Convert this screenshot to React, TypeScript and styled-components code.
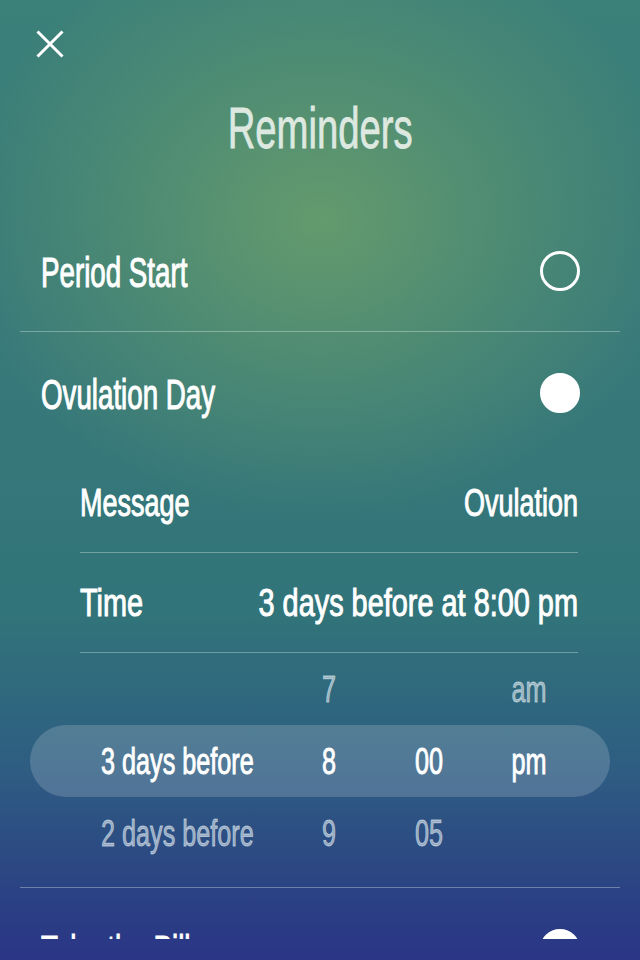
import React from "react";
import styled, { createGlobalStyle } from "styled-components";

const Global = createGlobalStyle`
  html, body { margin: 0; padding: 0; width: 640px; height: 960px; overflow: hidden; }
  body { font-family: "Liberation Sans", Arial, sans-serif; -webkit-font-smoothing: antialiased; }
  * { box-sizing: border-box; }
`;

const Screen = styled.div`
  width: 640px;
  height: 960px;
  overflow: hidden;
  display: flex;
  flex-direction: column;
  color: #fff;
  background:
    radial-gradient(ellipse 360px 300px at 50% 220px, rgba(102, 156, 108, 0.95), rgba(102, 156, 108, 0) 100%),
    linear-gradient(180deg, #3b8079 0%, #37797a 40%, #317479 64%, #2e5d82 80%, #2b4483 92%, #2a3586 100%);
`;

const Header = styled.header`
  height: 210px;
  flex-shrink: 0;
  display: flex;
  flex-direction: column;
  padding-top: 30px;
`;

const CloseButton = styled.button`
  width: 28px;
  height: 28px;
  margin-left: 36px;
  padding: 0;
  border: none;
  background: none;
  display: flex;
`;

const Title = styled.h1`
  margin: 40px 0 0;
  text-align: center;
  font-weight: 400;
  font-size: 58px;
  line-height: 60px;
  color: #dde9e0;
  -webkit-text-stroke: 0.8px #dde9e0;
`;

/* Condensed text: the face has no narrow cut, so it is compressed horizontally */
const Narrow = styled.span<{ $sx: number; $origin?: string }>`
  display: inline-block;
  white-space: nowrap;
  transform: scaleX(${(p) => p.$sx});
  transform-origin: ${(p) => p.$origin ?? "left center"};
`;

const NarrowLine = styled.div<{ $sx: number }>`
  flex-shrink: 0;
  width: ${(p) => 100 / p.$sx}%;
  display: flex;
  align-items: center;
  justify-content: space-between;
  white-space: nowrap;
  transform: scaleX(${(p) => p.$sx});
  transform-origin: left center;
`;

const List = styled.div`
  height: 729px;
  overflow: hidden;
  flex-shrink: 0;
`;

const Section = styled.section`
  margin: 0 20px;
  border-bottom: 1px solid rgba(255, 255, 255, 0.32);
`;

const SectionHeader = styled.div`
  height: 121px;
  display: flex;
  align-items: center;
  justify-content: space-between;
  padding: 4px 40px 0 21px;
`;

const SectionLabel = styled(Narrow)`
  font-size: 42px;
  color: #fff;
  -webkit-text-stroke: 1.1px #fff;
`;

const Toggle = styled.span<{ $on?: boolean }>`
  width: 40px;
  height: 40px;
  flex-shrink: 0;
  border-radius: 50%;
  border: 3px solid #fff;
  background: ${(p) => (p.$on ? "#fff" : "transparent")};
  margin-top: -4px;
`;

const SubRow = styled.div`
  height: 100px;
  margin: 0 42px 0 60px;
  border-bottom: 1px solid rgba(255, 255, 255, 0.32);
  display: flex;
  align-items: center;
  font-size: 38px;
  padding-top: 2px;
  -webkit-text-stroke: 1px #fff;
`;

const Picker = styled.div`
  margin: 0 10px;
  padding-bottom: 18px;
`;

const PickerRow = styled.div<{ $selected?: boolean }>`
  height: 72px;
  border-radius: 36px;
  display: grid;
  grid-template-columns: 178px 100px 100px 100px;
  align-items: center;
  padding-left: 71px;
  font-size: 36px;
  color: ${(p) => (p.$selected ? "#fff" : "rgba(230, 240, 245, 0.58)")};
  -webkit-text-stroke: 0.9px ${(p) => (p.$selected ? "#fff" : "rgba(230, 240, 245, 0.58)")};
  background: ${(p) => (p.$selected ? "rgba(255, 255, 255, 0.17)" : "transparent")};
`;

const PickerCell = styled.span<{ $align?: "left" | "center" }>`
  text-align: ${(p) => p.$align ?? "center"};
  white-space: nowrap;
  padding-top: 2px;
`;

const CloseIcon = () => (
  <svg width="28" height="28" viewBox="0 0 28 28">
    <path d="M1.5 1.5 L26.5 26.5 M26.5 1.5 L1.5 26.5" stroke="#fff" strokeWidth="3" fill="none" />
  </svg>
);

const pickerRows = [
  { label: "", hour: "7", minute: "", period: "am", selected: false },
  { label: "3 days before", hour: "8", minute: "00", period: "pm", selected: true },
  { label: "2 days before", hour: "9", minute: "05", period: "", selected: false },
];

const PSX = 0.7;

export default function App() {
  return (
    <>
      <Global />
      <Screen>
        <Header>
          <CloseButton aria-label="Close">
            <CloseIcon />
          </CloseButton>
          <Title>
            <Narrow $sx={0.66} $origin="center">Reminders</Narrow>
          </Title>
        </Header>
        <List>
          <Section>
            <SectionHeader>
              <SectionLabel $sx={0.66}>Period Start</SectionLabel>
              <Toggle />
            </SectionHeader>
          </Section>
          <Section>
            <SectionHeader>
              <SectionLabel $sx={0.66}>Ovulation Day</SectionLabel>
              <Toggle $on />
            </SectionHeader>
            <SubRow>
              <NarrowLine $sx={0.71}>
                <span>Message</span>
                <span>Ovulation</span>
              </NarrowLine>
            </SubRow>
            <SubRow>
              <NarrowLine $sx={0.76}>
                <span>Time</span>
                <span>3 days before at 8:00 pm</span>
              </NarrowLine>
            </SubRow>
            <Picker>
              {pickerRows.map((r, i) => (
                <PickerRow key={i} $selected={r.selected}>
                  <PickerCell $align="left">
                    <Narrow $sx={PSX}>{r.label}</Narrow>
                  </PickerCell>
                  <PickerCell>
                    <Narrow $sx={PSX} $origin="center">{r.hour}</Narrow>
                  </PickerCell>
                  <PickerCell>
                    <Narrow $sx={PSX} $origin="center">{r.minute}</Narrow>
                  </PickerCell>
                  <PickerCell>
                    <Narrow $sx={PSX} $origin="center">{r.period}</Narrow>
                  </PickerCell>
                </PickerRow>
              ))}
            </Picker>
          </Section>
          <Section>
            <SectionHeader>
              <SectionLabel $sx={0.66}>Take the Pill</SectionLabel>
              <Toggle $on />
            </SectionHeader>
          </Section>
        </List>
      </Screen>
    </>
  );
}
